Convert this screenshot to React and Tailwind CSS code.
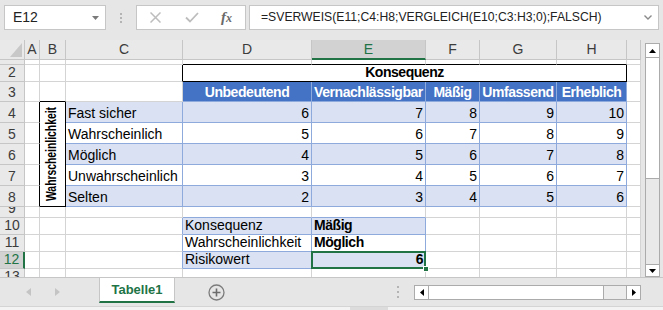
import React from 'react'

/* Excel-Ansicht: Risikomatrix mit SVERWEIS */

const LETTERS = ['A', 'B', 'C', 'D', 'E', 'F', 'G', 'H', 'I']
const ROWS = [1, 2, 3, 4, 5, 6, 7, 8, 9, 10, 11, 12, 13]

const HEADS = ['Unbedeutend', 'Vernachlässigbar', 'Mäßig', 'Umfassend', 'Erheblich']
const MATRIX = {
  4: ['Fast sicher', 6, 7, 8, 9, 10],
  5: ['Wahrscheinlich', 5, 6, 7, 8, 9],
  6: ['Möglich', 4, 5, 6, 7, 8],
  7: ['Unwahrscheinlich', 3, 4, 5, 6, 7],
  8: ['Selten', 2, 3, 4, 5, 6],
}
const LOOKUP = {
  10: ['Konsequenz', 'Mäßig'],
  11: ['Wahrscheinlichkeit', 'Möglich'],
  12: ['Risikowert', '6'],
}

const base = 'flex items-end overflow-hidden whitespace-nowrap border-r border-b px-[2px] pb-[1px] text-[14px] leading-[16px]'
const boldTxt = 'font-bold text-[13.5px] tracking-[-0.45px]'

function renderCell(r, c) {
  const key = c + r
  const ci = LETTERS.indexOf(c)

  // von Verbund überdeckt
  if (r === 2 && 'EFGH'.includes(c)) return null
  if (r >= 5 && r <= 8 && c === 'B') return null

  if (r === 2 && c === 'D') {
    return (
      <div key={key} className={`col-span-5 ${base} justify-center border-black bg-white ${boldTxt}`}>
        Konsequenz
      </div>
    )
  }

  if (r === 4 && c === 'B') {
    return (
      <div key={key} className="row-span-5 flex items-center justify-center border-r border-b border-black bg-white pr-[3px]">
        <span className="shrink-0 -rotate-90 scale-x-[0.74] whitespace-nowrap text-[14px] font-bold leading-none">
          Wahrscheinlichkeit
        </span>
      </div>
    )
  }

  let bg = 'bg-white'
  let bc = 'border-[#d4d4d4]'
  let extra = ''
  let align = 'justify-start'
  let content = null

  if (r === 1 && ci >= 3 && ci <= 7) extra = 'border-b-black'
  if (r === 2 && c === 'C') extra = 'border-r-black'
  if (r === 3 && c === 'B') extra = 'border-b-black'
  if (r >= 4 && r <= 8 && c === 'A') extra = 'border-r-black'

  // Kopfzeile der Matrix
  if (r === 3 && ci >= 3 && ci <= 7) {
    bg = 'bg-[#4472c4]'
    bc = 'border-[#8ea9db]'
    align = 'justify-center'
    extra = `text-white ${boldTxt}`
    content = HEADS[ci - 3]
  }

  // Matrixwerte
  if (r >= 4 && r <= 8 && ci >= 2 && ci <= 7) {
    bg = r % 2 === 0 ? 'bg-[#d9e1f2]' : 'bg-white'
    bc = 'border-[#8ea9db]'
    content = MATRIX[r][ci - 2]
    if (ci > 2) align = 'justify-end'
  }

  if (r === 9 && (c === 'D' || c === 'E')) extra = 'border-b-[#8ea9db]'
  if (r >= 10 && r <= 12 && c === 'C') extra = 'border-r-[#8ea9db]'

  // Nachschlagebereich
  if (r >= 10 && r <= 12 && (c === 'D' || c === 'E')) {
    bg = r === 11 ? 'bg-white' : 'bg-[#d9e1f2]'
    bc = 'border-[#8ea9db]'
    content = LOOKUP[r][c === 'D' ? 0 : 1]
    if (c === 'E') extra = boldTxt
    if (r === 12 && c === 'E') {
      return (
        <div key={key} className={`relative ${base} justify-end overflow-visible ${bg} ${bc} ${boldTxt}`}>
          {content}
          <div className="absolute -top-[1px] -left-[1px] -right-[1px] -bottom-[1px] z-10 border-2 border-[#217346]" />
          <div className="absolute -right-[4px] -bottom-[4px] z-20 h-[6px] w-[6px] border border-white bg-[#217346]" />
        </div>
      )
    }
  }

  return (
    <div key={key} className={`${base} ${align} ${bg} ${bc} ${extra}`}>
      {content}
    </div>
  )
}

function FormulaBar() {
  return (
    <div className="flex h-[40px] items-start pt-[5px] pl-[4px]">
      <div className="flex h-[25px] w-[102px] items-center justify-between border border-[#c6c6c6] bg-white pl-[8px] pr-[6px] text-[14px] text-[#222]">
        <span>E12</span>
        <svg width="7" height="4" viewBox="0 0 7 4">
          <path d="M0 0h7L3.5 4z" fill="#7a7a7a" />
        </svg>
      </div>
      <div className="flex h-[25px] w-[30px] flex-col items-center justify-center gap-[2px]">
        <span className="h-[2px] w-[2px] bg-[#b4b4b4]" />
        <span className="h-[2px] w-[2px] bg-[#b4b4b4]" />
        <span className="h-[2px] w-[2px] bg-[#b4b4b4]" />
      </div>
      <div className="flex h-[25px] w-[110px] items-center border border-[#c6c6c6] bg-white">
        <svg className="ml-[13px]" width="11" height="11" viewBox="0 0 11 11">
          <path d="M0.5 0.5l10 10M10.5 0.5l-10 10" stroke="#bdbdbd" strokeWidth="1.5" />
        </svg>
        <svg className="ml-[24px]" width="14" height="11" viewBox="0 0 14 11">
          <path d="M1 5.5l4 4 8-8.5" stroke="#bdbdbd" strokeWidth="1.8" fill="none" />
        </svg>
        <span className="ml-[22px] font-['Liberation_Serif',serif] text-[15px] font-bold italic leading-none text-[#6a6a6a]">
          f<span className="text-[12px]">x</span>
        </span>
      </div>
      <div className="ml-[3px] flex h-[25px] w-[410px] items-center justify-between border border-[#c6c6c6] bg-white pl-[11px] pr-[6px]">
        <span className="text-[12.2px] text-[#222]">=SVERWEIS(E11;C4:H8;VERGLEICH(E10;C3:H3;0);FALSCH)</span>
        <svg width="8" height="5" viewBox="0 0 8 5">
          <path d="M0.5 0.5l3.5 3.5 3.5-3.5" stroke="#8a8a8a" strokeWidth="1.4" fill="none" />
        </svg>
      </div>
    </div>
  )
}

function Sheet() {
  return (
    <div className="grid h-[237px] w-[641px] shrink-0 grid-cols-[25px_15px_26px_117px_129px_114px_54px_77px_70px_14px] grid-rows-[20px_5px_17px_20px_21px_21px_21px_21px_21px_11px_17px_17px_17px_17px] overflow-hidden bg-white text-black">
      {/* Spaltenköpfe */}
      <div className="relative border-r border-b border-[#c6c6c6] bg-[#e9e9e9]">
        <svg className="absolute left-0 top-0" width="25" height="20" viewBox="0 0 25 20">
          <path d="M10 17L22 3v14z" fill="#c8c8c8" />
        </svg>
      </div>
      {LETTERS.map(l => (
        <div
          key={l}
          className={
            l === 'E'
              ? 'flex items-center justify-center border-r border-b-2 border-[#c6c6c6] border-b-[#217346] bg-[#d2d2d2] text-[14px] text-[#217346]'
              : 'flex items-center justify-center border-r border-b border-[#c6c6c6] bg-[#e9e9e9] text-[14px] text-[#3c3c3c]'
          }
        >
          {l === 'I' ? '' : l}
        </div>
      ))}

      {ROWS.map(r => (
        <React.Fragment key={r}>
          <div
            className={
              r === 12
                ? 'flex items-end justify-center overflow-hidden border-r-2 border-b border-[#c6c6c6] border-r-[#217346] bg-[#d2d2d2] pb-[1px] text-[14px] leading-[16px] text-[#217346]'
                : 'flex items-end justify-center overflow-hidden border-r border-b border-[#c6c6c6] bg-[#e9e9e9] pb-[1px] text-[14px] leading-[16px] text-[#3c3c3c]'
            }
          >
            {r}
          </div>
          {LETTERS.map(c => renderCell(r, c))}
        </React.Fragment>
      ))}
    </div>
  )
}

function VScroll() {
  return (
    <div className="flex w-[22px] flex-col pl-[4px] pt-[3px]">
      <div className="flex h-[234px] w-[15px] flex-col border border-[#ababab] bg-[#e9e9e9]">
        <div className="flex h-[14px] items-center justify-center border-b border-[#ababab] bg-white">
          <svg width="7" height="4" viewBox="0 0 7 4"><path d="M0 4L3.5 0 7 4z" fill="#000" /></svg>
        </div>
        <div className="h-[121px] border-b border-[#ababab] bg-white" />
        <div className="flex-1" />
        <div className="flex h-[12px] items-center justify-center border-t border-[#ababab] bg-white">
          <svg width="7" height="4" viewBox="0 0 7 4"><path d="M0 0h7L3.5 4z" fill="#000" /></svg>
        </div>
      </div>
    </div>
  )
}

function TabBar() {
  return (
    <div className="flex h-[29px] border-t border-[#c6c6c6] bg-[#e6e6e6]">
      <div className="flex w-[99px] items-center pl-[26px]">
        <svg width="5" height="8" viewBox="0 0 5 8"><path d="M5 0v8L0 4z" fill="#c4c4c4" /></svg>
        <svg className="ml-[24px]" width="5" height="8" viewBox="0 0 5 8"><path d="M0 0v8l5-4z" fill="#c4c4c4" /></svg>
      </div>
      <div className="flex h-[25px] w-[76px] items-center justify-center border-x border-b-2 border-x-[#c6c6c6] border-b-[#217346] bg-white text-[13px] font-bold text-[#217346]">
        Tabelle1
      </div>
      <div className="flex w-[82px] items-center justify-center">
        <svg width="17" height="17" viewBox="0 0 17 17">
          <circle cx="8.5" cy="8.5" r="7.5" fill="none" stroke="#7c7c7c" strokeWidth="1.3" />
          <path d="M8.5 4.5v8M4.5 8.5h8" stroke="#6c6c6c" strokeWidth="1.6" />
        </svg>
      </div>
      <div className="w-[133px]" />
      <div className="flex w-[15px] flex-col items-center justify-center gap-[3px]">
        <span className="h-[2px] w-[2px] bg-[#b4b4b4]" />
        <span className="h-[2px] w-[2px] bg-[#b4b4b4]" />
        <span className="h-[2px] w-[2px] bg-[#b4b4b4]" />
      </div>
      <div className="w-[9px]" />
      <div className="mt-[7px] flex h-[15px] w-[227px] border border-[#ababab] bg-[#ececec]">
        <div className="flex w-[14px] items-center justify-center border-r border-[#ababab] bg-white">
          <svg width="4" height="7" viewBox="0 0 4 7"><path d="M4 0v7L0 3.5z" fill="#000" /></svg>
        </div>
        <div className="w-[175px] border-r border-[#ababab] bg-white" />
        <div className="flex-1" />
        <div className="flex w-[14px] items-center justify-center border-l border-[#ababab] bg-white">
          <svg width="4" height="7" viewBox="0 0 4 7"><path d="M0 0v7l4-3.5z" fill="#000" /></svg>
        </div>
      </div>
    </div>
  )
}

export default function App() {
  return (
    <div className="h-[310px] w-[663px] overflow-hidden bg-[#e6e6e6] font-['Liberation_Sans',Arial,sans-serif]">
      <FormulaBar />
      <div className="flex h-[237px]">
        <Sheet />
        <VScroll />
      </div>
      <TabBar />
      <div className="flex h-[4px] border-t border-[#d4d4d4] bg-[#f3f3f3]">
        <div className="ml-[350px] w-[38px] bg-[#dcdcdc]" />
      </div>
    </div>
  )
}
